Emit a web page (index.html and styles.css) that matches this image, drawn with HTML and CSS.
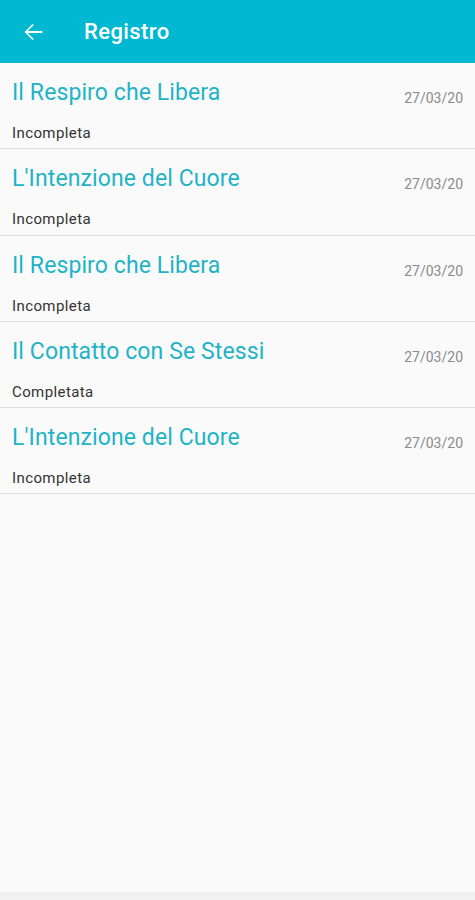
FILE: index.html
```html
<!DOCTYPE html>
<html>
<head>
    <meta charset="UTF-8">
    <title>Registro</title>
    <link rel="stylesheet" href="styles.css">
</head>
<body>

<div class="app-bar">
    <svg class="back" width="28" height="28" viewBox="0 0 24 24">
        <path d="M20 11.2H7.4l5.3-5.3-1-1L4.8 12l6.9 7.1 1-1-5.3-5.3H20z" fill="#fff"/>
    </svg>
    <span class="app-title">Registro</span>
</div>

<div class="list">
    <div class="item">
        <div class="item-top">
            <span class="item-title">Il Respiro che Libera</span>
            <span class="item-date">27/03/20</span>
        </div>
        <div class="item-status">Incompleta</div>
    </div>
    <div class="item">
        <div class="item-top">
            <span class="item-title">L'Intenzione del Cuore</span>
            <span class="item-date">27/03/20</span>
        </div>
        <div class="item-status">Incompleta</div>
    </div>
    <div class="item">
        <div class="item-top">
            <span class="item-title">Il Respiro che Libera</span>
            <span class="item-date">27/03/20</span>
        </div>
        <div class="item-status">Incompleta</div>
    </div>
    <div class="item">
        <div class="item-top">
            <span class="item-title">Il Contatto con Se Stessi</span>
            <span class="item-date">27/03/20</span>
        </div>
        <div class="item-status">Completata</div>
    </div>
    <div class="item">
        <div class="item-top">
            <span class="item-title">L'Intenzione del Cuore</span>
            <span class="item-date">27/03/20</span>
        </div>
        <div class="item-status">Incompleta</div>
    </div>
</div>

<div class="bottom-strip"></div>

</body>
</html>
```

FILE: styles.css
```css
html, body {
    margin: 0;
    height: 100%;
}

body {
    font-family: Roboto, "Noto Sans", sans-serif;
    background-color: #fafafa;
    display: flex;
    flex-direction: column;
}

.app-bar {
    height: 63px;
    background-color: #00b8d2;
    display: flex;
    align-items: center;
    padding-left: 19px;
    box-sizing: border-box;
    flex-shrink: 0;
}

.back {
    margin-right: 37px;
    margin-top: 1px;
}

.app-title {
    color: #fff;
    font-size: 22px;
    font-weight: 500;
    letter-spacing: 0.4px;
}

.list {
    flex: 1;
}

.item {
    padding: 16px 12px 6.25px 12px;
    border-bottom: 1px solid #dddddd;
}

.item-top {
    display: flex;
    justify-content: space-between;
    align-items: flex-start;
    height: 28px;
}

.item-title {
    color: #1fb3c8;
    font-size: 23px;
    line-height: 28px;
    letter-spacing: 0.1px;
}

.item-date {
    color: #8a8a8a;
    font-size: 14px;
    line-height: 18px;
    margin-top: 10px;
}

.item-status {
    color: #333;
    font-size: 15px;
    line-height: 18px;
    letter-spacing: 0.4px;
    margin-top: 17px;
}

.bottom-strip {
    height: 8px;
    background-color: #f1f1f1;
    flex-shrink: 0;
}
```
